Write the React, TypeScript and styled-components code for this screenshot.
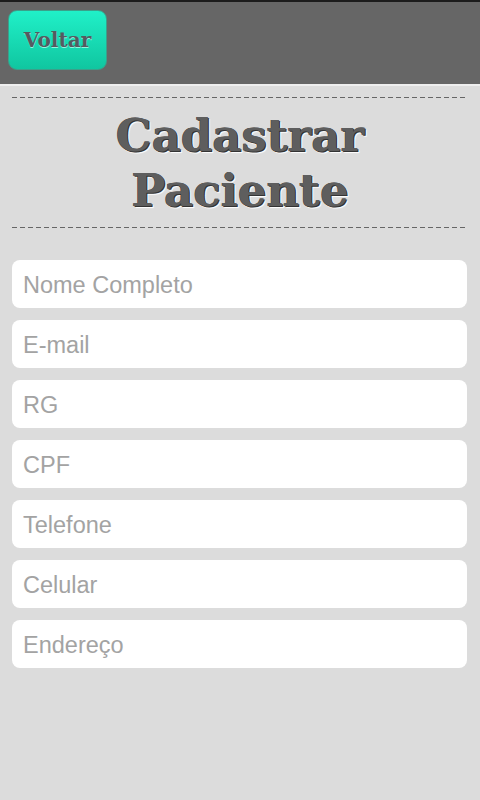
import styled, { createGlobalStyle } from "styled-components";

const PAGE_BG = "#dcdcdc";
const DASH = "#666666";

const GlobalStyle = createGlobalStyle`
  html, body {
    margin: 0;
    padding: 0;
    background: ${PAGE_BG};
  }
  * {
    box-sizing: border-box;
  }
`;

const Screen = styled.div`
  width: 480px;
  height: 800px;
  display: flex;
  flex-direction: column;
  background: ${PAGE_BG};
  overflow: hidden;
`;

const Header = styled.header`
  height: 86px;
  background: #666666;
  border-top: 2px solid #1c1c1c;
  border-bottom: 2px solid #eeeeee;
  padding: 8px 0 0 8px;
  display: flex;
  align-items: flex-start;
`;

const BackButton = styled.button`
  width: 99px;
  height: 60px;
  border: 1px solid #3aa08a;
  border-radius: 9px;
  background: linear-gradient(#20f0c8, #10c6a0);
  font-family: "DejaVu Serif", Georgia, serif;
  font-weight: bold;
  font-size: 20px;
  color: #555a60;
  text-shadow: 0 1px 0 #8ff5e0;
  cursor: pointer;
  padding: 0;
`;

// dashed rule with longer dashes than CSS "dashed" gives
const Rule = styled.div`
  height: 1px;
  margin: 0 12px;
  background-image: repeating-linear-gradient(
    to right,
    ${DASH} 0 5px,
    transparent 5px 8px
  );
`;

const TitleBlock = styled.div`
  margin-top: 11px;
`;

const Title = styled.h1`
  margin: 0;
  padding: 10px 0 9px;
  text-align: center;
  font-family: "DejaVu Serif", Georgia, serif;
  font-weight: bold;
  font-size: 45px;
  line-height: 55px;
  color: #5e5e5e;
  text-shadow: 1px 1px 0 #333333, -0.5px -0.5px 0 #444444, 2px 2px 1px #ffffff;
`;

const Form = styled.form`
  display: flex;
  flex-direction: column;
  gap: 12px;
  padding: 32px 13px 0 12px;
`;

const Field = styled.input`
  height: 48px;
  width: 100%;
  border: none;
  border-radius: 8px;
  background: #ffffff;
  padding: 2px 11px 0;
  font-family: "Liberation Sans", Arial, sans-serif;
  font-size: 23.5px;
  color: #333333;
  outline: none;

  &::placeholder {
    color: #a3a3a3;
  }
`;

const fields = [
  "Nome Completo",
  "E-mail",
  "RG",
  "CPF",
  "Telefone",
  "Celular",
  "Endereço",
];

export default function App() {
  return (
    <Screen>
      <GlobalStyle />
      <Header>
        <BackButton type="button">Voltar</BackButton>
      </Header>
      <TitleBlock>
        <Rule />
        <Title>
          Cadastrar
          <br />
          Paciente
        </Title>
        <Rule />
      </TitleBlock>
      <Form onSubmit={(e) => e.preventDefault()}>
        {fields.map((f) => (
          <Field key={f} placeholder={f} />
        ))}
      </Form>
    </Screen>
  );
}
